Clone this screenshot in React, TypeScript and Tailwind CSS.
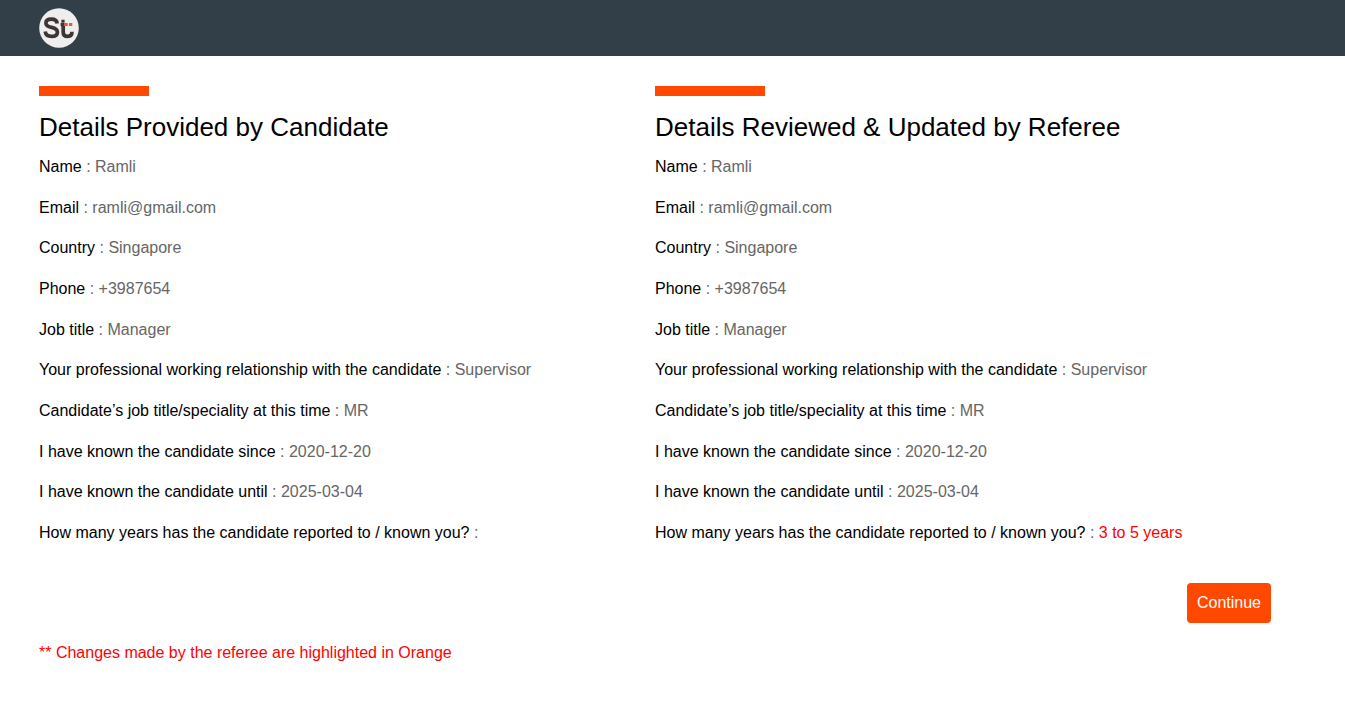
type Detail = { label: string; value: string; changed?: boolean };

const shared: Detail[] = [
  { label: 'Name', value: 'Ramli' },
  { label: 'Email', value: 'ramli@gmail.com' },
  { label: 'Country', value: 'Singapore' },
  { label: 'Phone', value: '+3987654' },
  { label: 'Job title', value: 'Manager' },
  { label: 'Your professional working relationship with the candidate', value: 'Supervisor' },
  { label: 'Candidate’s job title/speciality at this time', value: 'MR' },
  { label: 'I have known the candidate since', value: '2020-12-20' },
  { label: 'I have known the candidate until', value: '2025-03-04' },
];

const yearsLabel = 'How many years has the candidate reported to / known you?';

function Logo() {
  return (
    <svg viewBox="0 0 40 40" className="size-10" role="img" aria-label="St">
      <circle cx="20" cy="20" r="19.8" fill="#eeeeee" />
      <g fill="none" stroke="#3d3635" strokeWidth="3.7">
        <path d="M18.2 15.4C17.8 12.4 15.8 11.2 12.4 11.2C9 11.2 6.9 12.7 6.9 15.2C6.9 17.8 9 18.6 12.6 19.4C16.6 20.2 18.4 21.4 18.4 24.2C18.4 27 16.2 28.4 12.6 28.4C8.8 28.4 6.6 26.8 6.2 23.6" />
        <path d="M24.2 18V24.2C24.2 27.2 25.6 28.4 28.6 28.4C31.4 28.4 33 27 33 23.8" />
      </g>
      <path fill="#3d3635" d="M21.6 15h3.4v3.2h-3.4zM22.4 11.8h3.2v3h-3.2z" />
      <path fill="#f0523a" d="M25 15h3.7v3h-3.7zM30 15h3.3v3h-3.3z" />
    </svg>
  );
}

function DetailColumn({ title, details }: { title: string; details: Detail[] }) {
  return (
    <section>
      <div className="h-2.5 w-[110px] bg-[#ff4800]" />
      <h2 className="mt-[13px] text-[26px] leading-9">{title}</h2>
      <ul className="mt-2.5 grid min-h-[390px] content-between">
        {details.map(({ label, value, changed }) => (
          <li key={label} className="text-base leading-6 text-[#666]">
            <span className="text-black">{label}</span> :{' '}
            <span className={changed ? 'text-[#f00]' : ''}>{value}</span>
          </li>
        ))}
      </ul>
    </section>
  );
}

export default function App() {
  return (
    <div className="min-h-screen bg-white font-['Liberation_Sans',Arial,sans-serif] text-base text-black">
      <header className="flex h-14 items-center bg-[#323f48] px-[39px]">
        <a href="#">
          <Logo />
        </a>
      </header>
      <main className="pt-[30px] pr-[74px] pb-10 pl-[39px]">
        <div className="grid grid-cols-2">
          <DetailColumn
            title="Details Provided by Candidate"
            details={[...shared, { label: yearsLabel, value: '' }]}
          />
          <DetailColumn
            title="Details Reviewed & Updated by Referee"
            details={[...shared, { label: yearsLabel, value: '3 to 5 years', changed: true }]}
          />
        </div>
        <div className="mt-[38px] flex justify-end">
          <button type="button" className="h-10 rounded bg-[#ff4800] px-2.5 text-white">
            Continue
          </button>
        </div>
        <p className="mt-[18px] leading-6 text-[#f00]">
          ** Changes made by the referee are highlighted in Orange
        </p>
      </main>
    </div>
  );
}
